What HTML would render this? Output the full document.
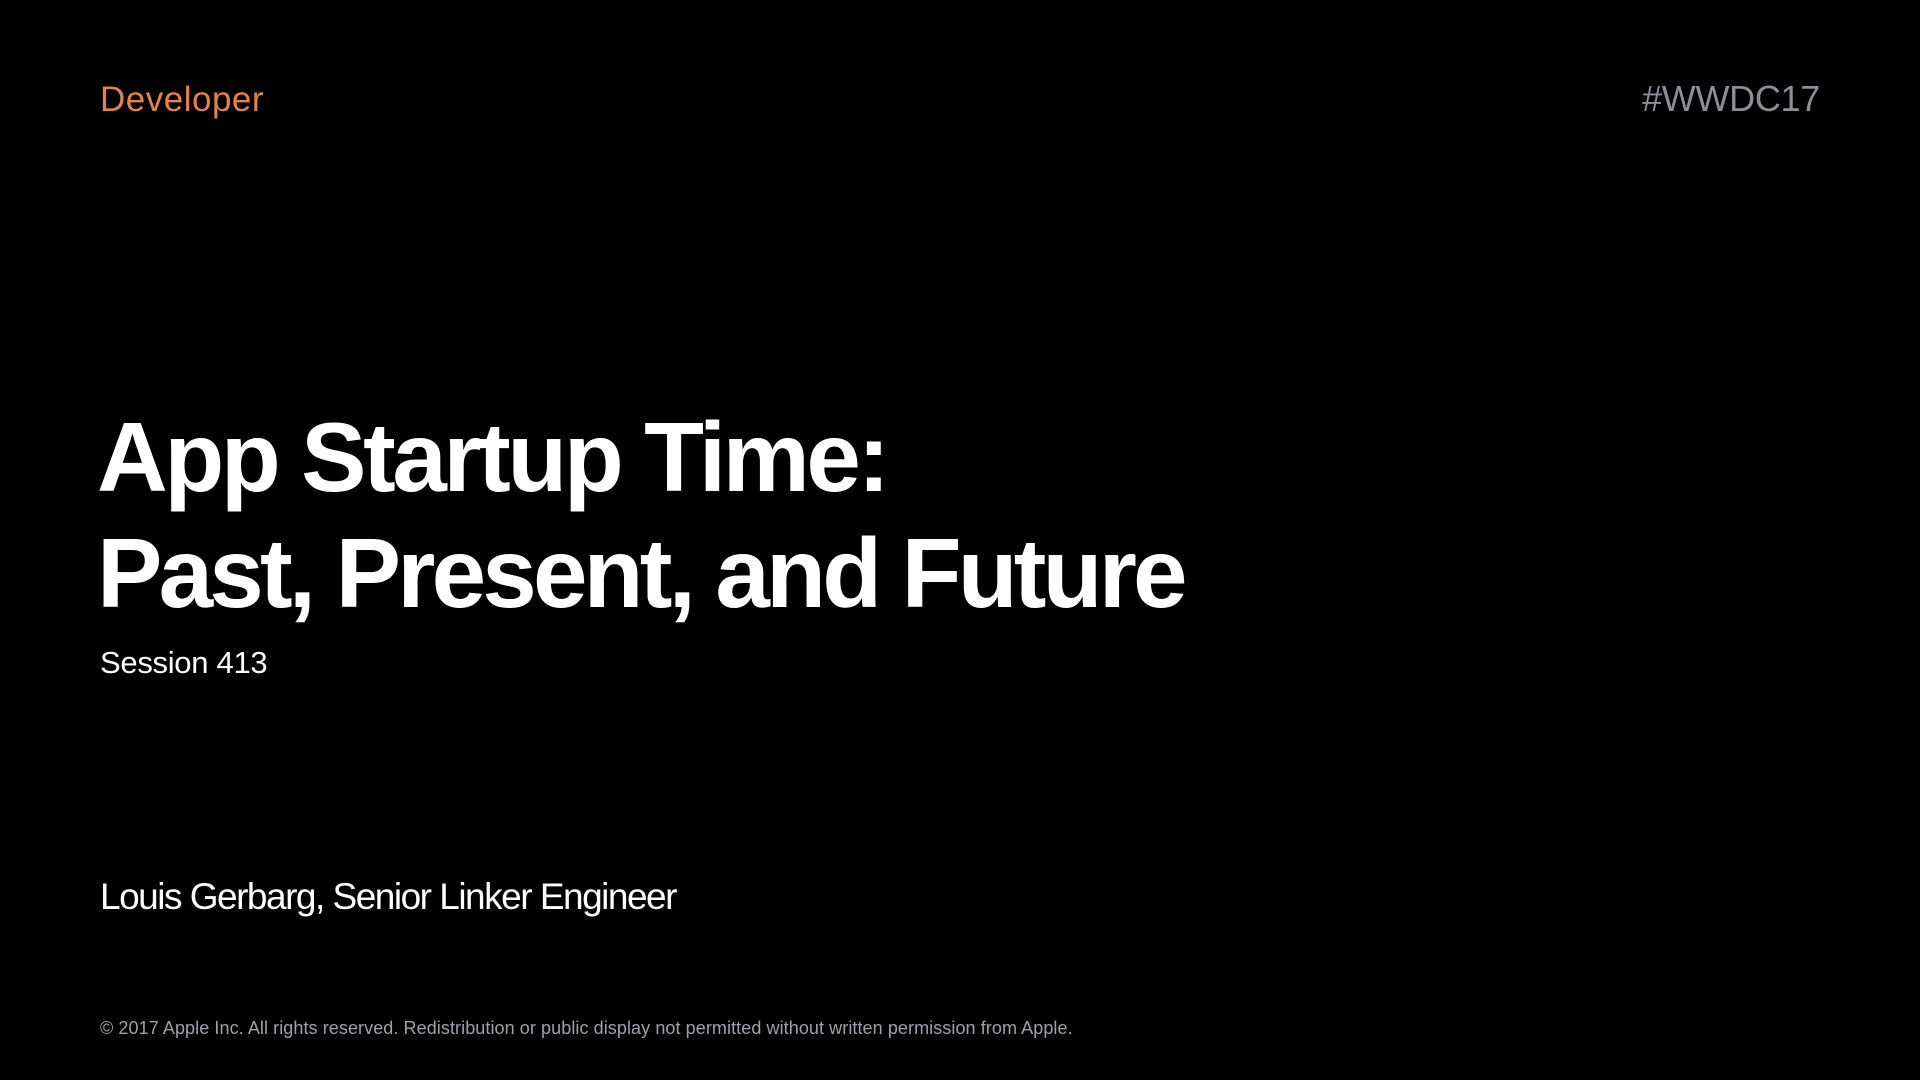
<!DOCTYPE html>
<html><head><meta charset="utf-8"><style>
body{margin:0;width:1920px;height:1080px;background:#000;overflow:hidden;font-family:"Liberation Sans",sans-serif;}
div{position:absolute;line-height:1;white-space:nowrap;}
</style></head><body>
<div style="left:100px;top:82px;font-size:35px;color:#e5814a;letter-spacing:0.5px;">Developer</div>
<div style="right:100px;top:81px;font-size:36px;color:#8e8e93;letter-spacing:-0.3px;">#WWDC17</div>
<div style="left:97px;top:408px;font-size:98px;font-weight:bold;color:#fff;letter-spacing:-3.4px;">App Startup Time:</div>
<div style="left:97px;top:524px;font-size:98px;font-weight:bold;color:#fff;letter-spacing:-3.8px;">Past, Present, and Future</div>
<div style="left:100px;top:647px;font-size:31px;color:#fff;letter-spacing:-0.3px;">Session 413</div>
<div style="left:100px;top:878px;font-size:37px;color:#fff;letter-spacing:-1.5px;">Louis Gerbarg, Senior Linker Engineer</div>
<div style="left:100px;top:1019px;font-size:18px;color:#a0a0a5;letter-spacing:0.08px;">© 2017 Apple Inc. All rights reserved. Redistribution or public display not permitted without written permission from Apple.</div>
</body></html>
